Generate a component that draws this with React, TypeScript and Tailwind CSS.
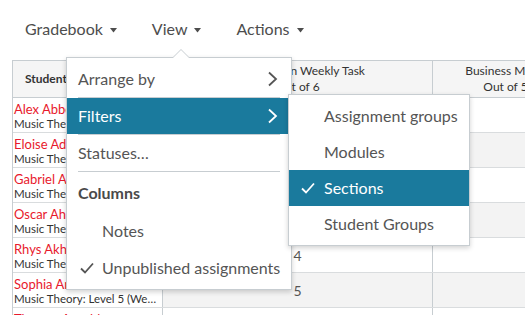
import React from 'react';

const STUDENTS = [
  { name: 'Alex Abbott', section: 'Music Theory: Level 5 (Weekend)', score: '' },
  { name: 'Eloise Adams', section: 'Music Theory: Level 5 (Weekend)', score: '' },
  { name: 'Gabriel Allen', section: 'Music Theory: Level 5 (Weekend)', score: '' },
  { name: 'Oscar Ahmed', section: 'Music Theory: Level 5 (Weekend)', score: '' },
  { name: 'Rhys Akhtar', section: 'Music Theory: Level 5 (Weekend)', score: '4' },
  { name: 'Sophia Anwar', section: 'Music Theory: Level 5 (Weekend)', score: '5' },
  { name: 'Thomas Arnold', section: 'Music Theory: Level 5 (Weekend)', score: '' },
];

function Caret() {
  return (
    <svg width="7" height="5" viewBox="0 0 7 5" className="ml-[7px] mt-[2px]">
      <path d="M0 0 L7 0 L3.5 4.5 Z" fill="#4d4d4d" />
    </svg>
  );
}

function Chevron({ color }: { color: string }) {
  return (
    <svg width="11" height="16" viewBox="0 0 11 16">
      <path d="M2 1.5 L9 8 L2 14.5" fill="none" stroke={color} strokeWidth="1.8" />
    </svg>
  );
}

function Check({ color }: { color: string }) {
  return (
    <svg width="14" height="12" viewBox="0 0 14 12">
      <path d="M1 6.5 L5 10.5 L13 1.5" fill="none" stroke={color} strokeWidth="1.8" />
    </svg>
  );
}

export default function App() {
  return (
    <div className="relative w-[525px] h-[315px] overflow-hidden bg-white font-['Lato','Open_Sans',sans-serif]">
      {/* Top nav */}
      <div className="flex items-center h-[60px] pl-[25px] pb-[2px] text-[16px] text-[#4d4d4d]">
        <div className="flex items-center">Gradebook<Caret /></div>
        <div className="flex items-center ml-[35px]">View<Caret /></div>
        <div className="flex items-center ml-[35px]">Actions<Caret /></div>
      </div>

      {/* Grid */}
      <div className="ml-[12px] w-[600px] border-t border-l border-[#c7cdd1]">
        <div className="flex h-[37px] bg-[#f5f5f5] border-b border-[#c7cdd1] text-[12px] text-[#333]">
          <div className="w-[150px] shrink-0 border-r border-[#c7cdd1] flex items-center pl-[12px] font-bold">Student Name</div>
          <div className="w-[270px] shrink-0 border-r border-[#c7cdd1] flex flex-col items-center justify-center leading-[16px]">
            <span className="whitespace-nowrap">Composition Weekly Task</span>
            <span>Out of 6</span>
          </div>
          <div className="w-[146px] shrink-0 border-r border-[#c7cdd1] flex flex-col items-center justify-center leading-[16px]">
            <span className="whitespace-nowrap">Business Music</span>
            <span>Out of 5</span>
          </div>
        </div>
        {STUDENTS.map((s, i) => (
          <div
            key={s.name}
            className={`flex h-[35px] border-b border-[#d9dcde] ${i % 2 === 1 ? 'bg-[#f3f3f3]' : 'bg-white'}`}
          >
            <div className="w-[150px] shrink-0 border-r border-[#c7cdd1] pl-[1px] pt-[3px] overflow-hidden bg-white">
              <div className="text-[13px] leading-[16px] text-[#e8192c] whitespace-nowrap">{s.name}</div>
              <div className="text-[11.5px] leading-[13px] text-[#333] whitespace-nowrap overflow-hidden text-ellipsis pr-[2px]">{s.section}</div>
            </div>
            <div className="w-[270px] shrink-0 border-r border-[#c7cdd1] flex items-center justify-center text-[14px] text-[#555]">
              {s.score}
            </div>
            <div className="w-[146px] shrink-0 border-r border-[#c7cdd1]" />
          </div>
        ))}
      </div>

      {/* View menu */}
      <div className="absolute left-[66px] top-[57px] w-[226px] bg-white border border-[#c7cdd1] shadow-[0_2px_5px_rgba(0,0,0,0.18)] py-[3px] text-[16px] text-[#555]">
        <div className="absolute -top-[9px] left-[105px] w-0 h-0 border-l-[9px] border-r-[9px] border-b-[9px] border-l-transparent border-r-transparent border-b-[#c7cdd1]" />
        <div className="absolute -top-[8px] left-[106px] w-0 h-0 border-l-[8px] border-r-[8px] border-b-[8px] border-l-transparent border-r-transparent border-b-white" />
        <div className="flex items-center justify-between h-[36px] pl-[11px] pr-[13px]">
          <span>Arrange by</span>
          <Chevron color="#555" />
        </div>
        <div className="mx-[11px] h-[1px] bg-[#c7cdd1]" />
        <div className="flex items-center justify-between h-[36px] pl-[11px] pr-[13px] bg-[#1a7a9d] text-white">
          <span>Filters</span>
          <Chevron color="#ffffff" />
        </div>
        <div className="mx-[11px] h-[1px] bg-[#c7cdd1]" />
        <div className="flex items-center h-[36px] pl-[11px]">Statuses…</div>
        <div className="mx-[11px] h-[1px] bg-[#c7cdd1]" />
        <div className="flex items-center h-[41px] pl-[11px] font-bold text-[#4a4a4a]">Columns</div>
        <div className="flex items-center h-[36px] pl-[35px]">Notes</div>
        <div className="flex items-center h-[37px] pl-[13px]">
          <span className="w-[22px] flex"><Check color="#555" /></span>
          <span>Unpublished assignments</span>
        </div>
      </div>

      {/* Filters submenu */}
      <div className="absolute left-[288px] top-[94px] w-[182px] bg-white border border-[#c7cdd1] shadow-[0_2px_5px_rgba(0,0,0,0.18)] py-[3px] text-[16px] text-[#555]">
        <div className="flex items-center h-[36px] pl-[35px]">Assignment groups</div>
        <div className="flex items-center h-[36px] pl-[35px]">Modules</div>
        <div className="flex items-center h-[36px] pl-[12px] bg-[#1a7a9d] text-white">
          <span className="w-[23px] flex"><Check color="#ffffff" /></span>
          <span>Sections</span>
        </div>
        <div className="flex items-center h-[36px] pl-[35px]">Student Groups</div>
      </div>
    </div>
  );
}
